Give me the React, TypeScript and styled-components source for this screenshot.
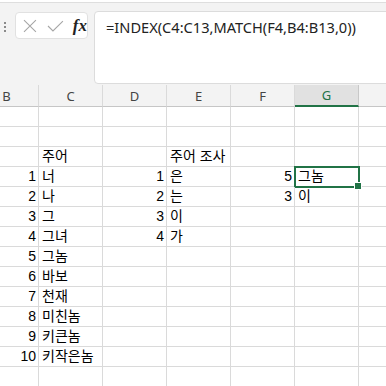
import styled, { createGlobalStyle } from "styled-components";

const GlobalStyle = createGlobalStyle`
  html, body {
    margin: 0;
    padding: 0;
    background: #ffffff;
  }
  #root {
    width: 386px;
    height: 386px;
    overflow: hidden;
  }
`;

// H is only half in view, its letter falls past the edge
const COLS = ["B", "C", "D", "E", "F", "G", "H"];
const HEAD = ["B", "C", "D", "E", "F", "G", ""];

type Cell = { v?: string; num?: boolean };

// row data, one entry for each column B..H
const rows: Cell[][] = [
  [],
  [],
  [{}, { v: "주어" }, {}, { v: "주어 조사" }],
  [{ v: "1", num: true }, { v: "너" }, { v: "1", num: true }, { v: "은" }, { v: "5", num: true }, { v: "그놈" }],
  [{ v: "2", num: true }, { v: "나" }, { v: "2", num: true }, { v: "는" }, { v: "3", num: true }, { v: "이" }],
  [{ v: "3", num: true }, { v: "그" }, { v: "3", num: true }, { v: "이" }],
  [{ v: "4", num: true }, { v: "그녀" }, { v: "4", num: true }, { v: "가" }],
  [{ v: "5", num: true }, { v: "그놈" }],
  [{ v: "6", num: true }, { v: "바보" }],
  [{ v: "7", num: true }, { v: "천재" }],
  [{ v: "8", num: true }, { v: "미친놈" }],
  [{ v: "9", num: true }, { v: "키큰놈" }],
  [{ v: "10", num: true }, { v: "키작은놈" }],
  [],
];

const App = () => {
  return (
    <>
      <GlobalStyle />
      <SheetStyled>
        <FormulaAreaStyled>
          <GripStyled>
            <span />
            <span />
            <span />
          </GripStyled>
          <NameBoxStyled>
            <svg width="14" height="14" viewBox="0 0 14 14">
              <path d="M1 1 L13 13 M13 1 L1 13" stroke="#a6a6a6" strokeWidth="1.1" fill="none" />
            </svg>
            <svg width="17" height="12" viewBox="0 0 17 12">
              <path d="M1 6 L6 11 L16 1" stroke="#a6a6a6" strokeWidth="1.1" fill="none" />
            </svg>
            <FxStyled>fx</FxStyled>
          </NameBoxStyled>
          <FormulaBoxStyled>=INDEX(C4:C13,MATCH(F4,B4:B13,0))</FormulaBoxStyled>
        </FormulaAreaStyled>
        <GridStyled>
          {HEAD.map((c, i) => (
            <HeaderCellStyled key={i} $active={c === "G"}>
              {c}
            </HeaderCellStyled>
          ))}
          {rows.map((r, ri) =>
            COLS.map((c, ci) => {
              const cell = r[ci] || {};
              return (
                <CellStyled
                  key={`${ri}-${c}`}
                  $num={cell.num}
                  $selected={ri === 3 && c === "G"}
                >
                  {cell.v}
                </CellStyled>
              );
            })
          )}
        </GridStyled>
      </SheetStyled>
    </>
  );
};

const SheetStyled = styled.div`
  width: 386px;
  height: 386px;
  overflow: hidden;
  background: #ffffff;
`;

const FormulaAreaStyled = styled.div`
  display: flex;
  align-items: flex-start;
  height: 85px;
  margin-top: 2px;
  padding-top: 8px;
  box-sizing: border-box;
  background: #f3f3f3;
  border-top: 1px solid #dedede;
`;

const GripStyled = styled.div`
  display: flex;
  flex-direction: column;
  gap: 2px;
  width: 15px;
  padding: 11px 0 0 4px;
  box-sizing: border-box;
  span {
    width: 2px;
    height: 2px;
    background: #8a8a8a;
  }
`;

const NameBoxStyled = styled.div`
  display: flex;
  align-items: center;
  gap: 10px;
  width: 73px;
  height: 27px;
  margin-top: 1px;
  padding-left: 7px;
  box-sizing: border-box;
  background: #ffffff;
  border: 1px solid #e1e1e1;
  border-radius: 4px;
`;

const FxStyled = styled.span`
  font-family: "Liberation Serif", serif;
  font-style: italic;
  font-weight: bold;
  font-size: 17px;
  color: #222222;
  margin-left: -1px;
`;

const FormulaBoxStyled = styled.div`
  flex: 1;
  height: 73px;
  margin-left: 6px;
  margin-right: -10px;
  padding: 5px 0 0 11px;
  box-sizing: border-box;
  background: #ffffff;
  border: 1px solid #dcdcdc;
  border-radius: 4px;
  font-family: "Noto Sans", sans-serif;
  font-size: 14.6px;
  color: #222222;
`;

const GridStyled = styled.div`
  display: grid;
  grid-template-columns: repeat(7, 64px);
  grid-auto-rows: 20px;
  margin-left: -25px;
  width: 448px;
  background: #ffffff;
`;

const HeaderCellStyled = styled.div<{ $active?: boolean }>`
  height: 22px;
  margin-top: -2px;
  display: flex;
  align-items: center;
  justify-content: center;
  box-sizing: border-box;
  background: ${(p) => (p.$active ? "#e1e1e1" : "#f3f3f3")};
  border-right: 1px solid ${(p) => (p.$active ? "#c8c8c8" : "#dadada")};
  border-bottom: ${(p) => (p.$active ? "2px solid #217346" : "1px solid #c6c6c6")};
  font-family: "Noto Sans", sans-serif;
  font-size: 13px;
  color: ${(p) => (p.$active ? "#217346" : "#444444")};
`;

const CellStyled = styled.div<{ $num?: boolean; $selected?: boolean }>`
  position: relative;
  display: flex;
  align-items: flex-end;
  justify-content: ${(p) => (p.$num ? "flex-end" : "flex-start")};
  padding: 0 2px 1px 3px;
  box-sizing: border-box;
  border-right: 1px solid #dadada;
  border-bottom: 1px solid #dadada;
  font-family: "Liberation Sans", "Noto Sans CJK KR", sans-serif;
  font-size: 14px;
  line-height: 18px;
  color: #000000;
  white-space: nowrap;
  ${(p) =>
    p.$selected &&
    `
    &::after {
      content: "";
      position: absolute;
      left: -1px;
      top: -1px;
      right: -2px;
      bottom: -2px;
      border: 2px solid #217346;
    }
    &::before {
      content: "";
      position: absolute;
      right: -4px;
      bottom: -4px;
      width: 6px;
      height: 6px;
      background: #217346;
      border: 1px solid #ffffff;
      z-index: 1;
    }
  `}
`;

export default App;
